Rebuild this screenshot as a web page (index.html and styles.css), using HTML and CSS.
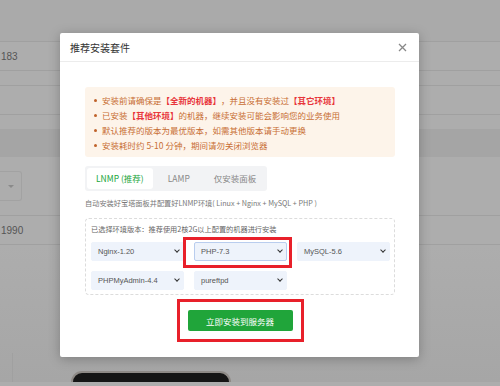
FILE: index.html
```html
<!DOCTYPE html>
<html lang="zh-CN">
<head>
    <meta charset="UTF-8">
    <title>推荐安装套件</title>
    <link rel="stylesheet" href="styles.css">
</head>
<body>
    <div class="page">
        <div class="page-top"></div>
        <div class="row"><span class="cell">183</span></div>
        <div class="gap"></div>
        <div class="row"></div>
        <div class="gap"></div>
        <div class="band"></div>
        <div class="filter">
            <div class="fake-select"><span class="caret"></span></div>
        </div>
        <div class="row"><span class="cell">1990</span></div>
        <div class="page-bottom">
            <div class="vline"></div>
            <div class="phone"></div>
        </div>
    </div>

    <div class="modal">
        <div class="modal-header">
            <span class="modal-title">推荐安装套件</span>
            <svg class="close" width="9" height="9" viewBox="0 0 9 9">
                <path d="M1 1 L8 8 M8 1 L1 8" stroke="#888" stroke-width="1.3" fill="none"/>
            </svg>
        </div>

        <div class="modal-body">
            <ul class="notice">
                <li>安装前请确保是<b>【全新的机器】</b>，并且没有安装过<b>【其它环境】</b></li>
                <li>已安装<b>【其他环境】</b>的机器，继续安装可能会影响您的业务使用</li>
                <li>默认推荐的版本为最优版本，如需其他版本请手动更换</li>
                <li>安装耗时约 5-10 分钟，期间请勿关闭浏览器</li>
            </ul>

            <div class="tabs">
                <span class="tab active">LNMP (推荐)</span>
                <span class="tab">LAMP</span>
                <span class="tab">仅安装面板</span>
            </div>

            <p class="desc">自动安装好宝塔面板并配置好LNMP环境( Linux + Nginx + MySQL + PHP )</p>

            <div class="versions">
                <div class="versions-label">已选择环境版本：推荐使用2核2G以上配置的机器进行安装</div>
                <div class="select-grid">
                    <div class="select">Nginx-1.20<span class="chev"></span></div>
                    <div class="select focused">PHP-7.3<span class="chev"></span></div>
                    <div class="select">MySQL-5.6<span class="chev"></span></div>
                    <div class="select">PHPMyAdmin-4.4<span class="chev"></span></div>
                    <div class="select">pureftpd<span class="chev"></span></div>
                </div>
            </div>

            <div class="actions">
                <button class="install-btn">立即安装到服务器</button>
            </div>
        </div>

        <div class="mark mark-php"></div>
        <div class="mark mark-btn"></div>
    </div>
</body>
</html>
```

FILE: styles.css
```css
* {
    margin: 0;
    padding: 0;
    box-sizing: border-box;
}

html {
    overflow: hidden;
}

body {
    width: 500px;
    height: 386px;
    overflow: hidden;
    background: #adadad;
    font-family: "Noto Sans CJK SC", "Noto Sans", sans-serif;
    position: relative;
}

/* page behind the overlay */
.page-top {
    height: 42px;
    border-bottom: 1px solid #a0a0a0;
    background: #aaaaaa;
}

.row {
    height: 29px;
    border-bottom: 1px solid #a0a0a0;
    display: flex;
    align-items: center;
}

.cell {
    font-family: "Liberation Sans", sans-serif;
    font-size: 10px;
    color: #555;
    padding-left: 1px;
}

.gap {
    height: 15px;
    border-bottom: 1px solid #a0a0a0;
}

.band {
    height: 28px;
    background: #a5a5a5;
    margin-top: -1px;
}

.filter {
    height: 59px;
    padding-top: 14px;
    border-bottom: 1px solid #a0a0a0;
}

.fake-select {
    width: 22px;
    height: 30px;
    border: 1px solid #a2a2a2;
    border-left: none;
    border-radius: 0 3px 3px 0;
    display: flex;
    align-items: center;
    justify-content: center;
}

.caret {
    width: 0;
    height: 0;
    border-left: 3px solid transparent;
    border-right: 3px solid transparent;
    border-top: 3px solid #8a8a8a;
}

.page-bottom {
    position: relative;
    height: 137px;
    background: linear-gradient(#adadad, #a6a6a6);
}

.vline {
    position: absolute;
    left: 12px;
    top: 108px;
    width: 1px;
    height: 29px;
    background: #a0a0a0;
}

.phone {
    position: absolute;
    left: 71px;
    top: 126px;
    width: 160px;
    height: 11px;
    background: #151515;
    border: 2px solid #8e8a86;
    border-bottom: none;
    border-radius: 16px 16px 0 0;
}

/* modal */
.modal {
    position: absolute;
    left: 60px;
    top: 33px;
    width: 359px;
    height: 324px;
    background: #fff;
    border-radius: 2px;
    box-shadow: 0 2px 12px rgba(0, 0, 0, 0.25);
}

.modal-header {
    height: 29px;
    border-bottom: 1px solid #ececec;
    display: flex;
    align-items: center;
    justify-content: space-between;
    padding: 0 12px 0 10px;
}

.modal-title {
    font-size: 10px;
    color: #333;
}

.modal-body {
    padding: 25px 24px 0 25px;
}

.notice {
    list-style: none;
    background: #fdf4ea;
    border-radius: 3px;
    padding: 6px 8px 4px 9px;
    font-size: 8.5px;
    line-height: 15px;
    color: #c86e34;
}

.notice li {
    display: flex;
    align-items: center;
}

.notice li::before {
    content: "";
    width: 3px;
    height: 3px;
    border-radius: 50%;
    background: #c0622a;
    margin-right: 5px;
}

.notice b {
    color: #e8353a;
    font-weight: bold;
}

.tabs {
    display: inline-flex;
    gap: 6px;
    margin-top: 9px;
    padding: 2px;
    height: 25px;
    background: #f2f3f5;
    border-radius: 3px;
}

.tab {
    padding: 0 9px;
    font-size: 8.5px;
    line-height: 20px;
    color: #888;
    border-radius: 3px;
}

.tab.active {
    background: #fff;
    color: #20a53a;
}

.desc {
    margin-top: 5px;
    font-size: 7.2px;
    line-height: 14px;
    color: #777;
}

.versions {
    margin-top: 8px;
    border: 1px dashed #dcdcdc;
    border-radius: 4px;
    padding: 3px 5px 4px 5px;
}

.versions-label {
    font-size: 7.2px;
    line-height: 14px;
    color: #666;
}

.select-grid {
    margin-top: 6px;
    display: grid;
    grid-template-columns: repeat(3, 93px);
    gap: 10px 10px;
}

.select {
    height: 19px;
    background: #eef3fb;
    border: 1px solid #eef3fb;
    border-radius: 2px;
    padding: 0 4px 0 6px;
    display: flex;
    align-items: center;
    justify-content: space-between;
    font-family: "Liberation Sans", sans-serif;
    font-size: 7.5px;
    color: #555;
}

.select.focused {
    border-color: #b9cdee;
}

.chev {
    width: 4px;
    height: 4px;
    border-right: 1.5px solid #333;
    border-bottom: 1.5px solid #333;
    transform: rotate(45deg);
    margin-top: -3px;
}

.actions {
    display: flex;
    justify-content: center;
    margin-top: 15px;
}

.install-btn {
    width: 105px;
    height: 21px;
    border: none;
    border-radius: 2px;
    background: #20a53a;
    color: #fff;
    font-family: "Noto Sans CJK SC", sans-serif;
    font-size: 8.5px;
}

/* red annotation frames */
.mark {
    position: absolute;
    border: 3px solid #e8202a;
}

.mark-php {
    left: 123px;
    top: 204px;
    width: 109px;
    height: 31px;
}

.mark-btn {
    left: 117px;
    top: 266px;
    width: 127px;
    height: 43px;
}
```
